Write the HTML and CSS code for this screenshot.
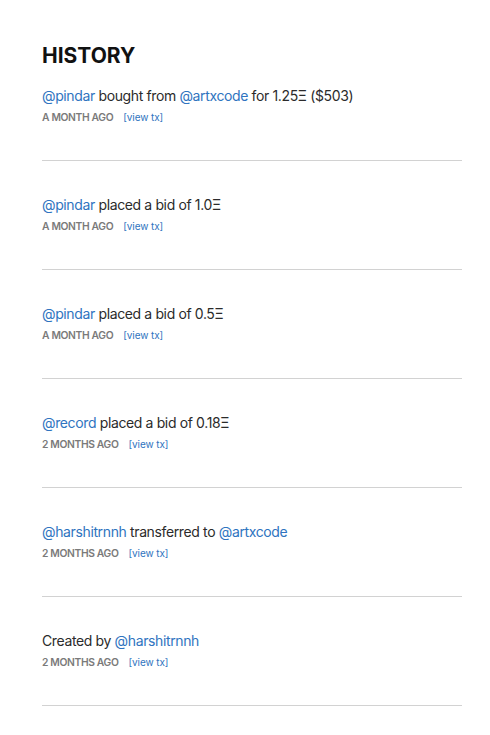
FILE: index.html
```html
<!DOCTYPE html>
<html>
<head>
<meta charset="utf-8">
<title>History</title>
<link rel="stylesheet" href="styles.css">
</head>
<body>
<div class="history">
	<h2 class="history-title">HISTORY</h2>

	<div class="event">
		<div class="event-text"><a href="#">@pindar</a> bought from <a href="#">@artxcode</a> for 1.25Ξ ($503)</div>
		<div class="event-meta">A MONTH AGO <a href="#">[view tx]</a></div>
	</div>

	<div class="event">
		<div class="event-text"><a href="#">@pindar</a> placed a bid of 1.0Ξ</div>
		<div class="event-meta">A MONTH AGO <a href="#">[view tx]</a></div>
	</div>

	<div class="event">
		<div class="event-text"><a href="#">@pindar</a> placed a bid of 0.5Ξ</div>
		<div class="event-meta">A MONTH AGO <a href="#">[view tx]</a></div>
	</div>

	<div class="event">
		<div class="event-text"><a href="#">@record</a> placed a bid of 0.18Ξ</div>
		<div class="event-meta">2 MONTHS AGO <a href="#">[view tx]</a></div>
	</div>

	<div class="event">
		<div class="event-text"><a href="#">@harshitrnnh</a> transferred to <a href="#">@artxcode</a></div>
		<div class="event-meta">2 MONTHS AGO <a href="#">[view tx]</a></div>
	</div>

	<div class="event">
		<div class="event-text">Created by <a href="#">@harshitrnnh</a></div>
		<div class="event-meta">2 MONTHS AGO <a href="#">[view tx]</a></div>
	</div>
</div>
</body>
</html>
```
FILE: styles.css
```css
body{
	margin: 0;
	background-color: #ffffff;
	color: #2b2b2b;
	font-family: Inter, "Liberation Sans", sans-serif;
}

.history{
	padding: 42px 28px 0 42px;
}

.history-title{
	margin: 0 0 16px 0;
	font-size: 21px;
	font-weight: 700;
	line-height: 28px;
	color: #111111;
}

.event{
	padding: 0 0 35px 0;
	margin-bottom: 34px;
	border-bottom: 1px solid #d2d2d2;
}

.event-text{
	height: 20px;
	font-size: 14px;
	line-height: 20px;
	letter-spacing: -0.37px;
}

.event-meta{
	display: flex;
	align-items: baseline;
	gap: 10px;
	height: 15px;
	margin-top: 4px;
	font-size: 10.3px;
	line-height: 15px;
	font-weight: 600;
	color: #7a7a7a;
	letter-spacing: -0.35px;
}

.event-meta a{
	font-size: 10px;
	font-weight: 400;
	letter-spacing: -0.1px;
}

a:link { color: #2f74c0; text-decoration: none; }
a:visited { color: #2f74c0; }
```
